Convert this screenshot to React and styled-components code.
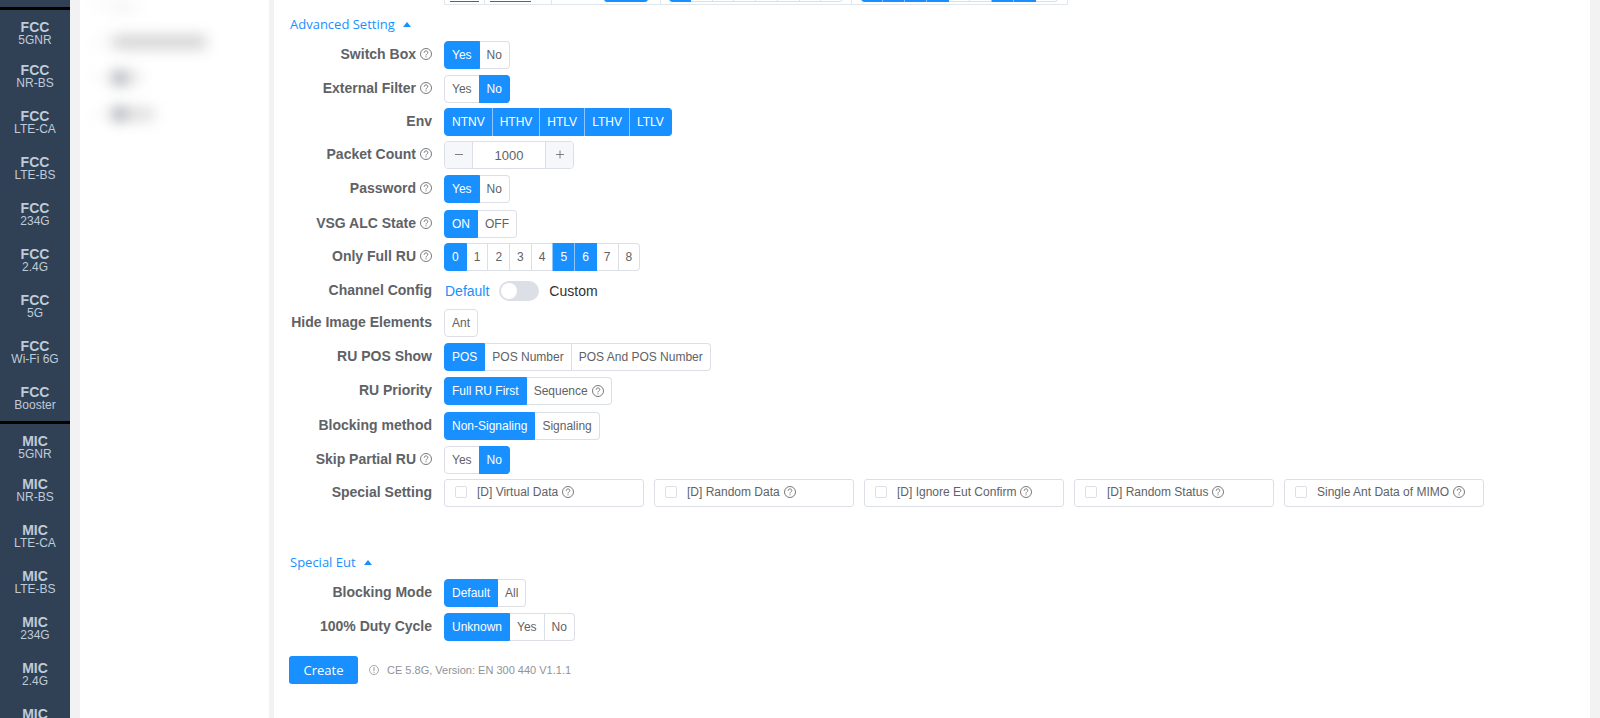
import React from 'react';
import styled, { createGlobalStyle } from 'styled-components';

const GlobalStyle = createGlobalStyle`
    * {
        box-sizing: border-box;
    }
    body {
        margin: 0;
        background-color: #f2f2f2;
        color: #606266;
        font-family: "Liberation Sans", Arial, sans-serif;
        font-size: 12px;
    }
`;

const Page = styled.div`
    display: flex;
    height: 100vh;
    overflow: hidden;
`;

const SideNav = styled.nav`
    flex: 0 0 70px;
    padding-top: 7px;
    background-color: #304156;
    overflow: hidden;
`;

const NavGroup = styled.div`
    border-top: 3px solid #000;
`;

const NavItem = styled.a`
    display: block;
    height: 46px;
    padding-top: 10px;
    color: #bfcbd9;
    font-size: 12px;
    line-height: 12px;
    text-align: center;
    text-decoration: none;

    &:first-child {
        height: 43px;
    }
`;

const NavTitle = styled.strong`
    display: block;
    font-size: 14px;
    line-height: 14px;
`;

const TreePanel = styled.aside`
    flex: 0 0 189px;
    margin: 0 5px 0 10px;
    padding: 0 16px;
    background-color: #fff;
    overflow: hidden;
`;

const TreeNode = styled.div`
    display: flex;
    align-items: center;
    height: 36px;
    filter: blur(7px);

    &:first-child {
        height: 24px;
        align-items: flex-start;
    }
`;

const TreeArrow = styled.span`
    width: 6px;
    height: 6px;
    margin-right: 10px;
    background-color: #e8e8e8;
`;

const TreeIcon = styled.span`
    width: 14px;
    height: 14px;
    background-color: ${props => props.$color};
`;

const TreeText = styled.span`
    width: ${props => props.$width}px;
    height: 14px;
    background-color: ${props => props.$color};
`;

const Main = styled.main`
    flex: 1;
    min-width: 0;
    margin-right: 10px;
    padding: 0 15px;
    background-color: #fff;
`;

const TableTail = styled.div`
    display: flex;
    width: 624px;
    height: 5px;
    margin-left: 155px;
    border: solid #dfe6ec;
    border-width: 0 0 1px 1px;
`;

const TailCell = styled.div`
    display: flex;
    align-items: flex-end;
    flex: 0 0 ${props => props.$width}px;
    height: 4px;
    padding: 0 ${props => props.$pad || 5}px 2px;
    border-right: 1px solid #dfe6ec;
    overflow: hidden;
`;

const TailUnderline = styled.span`
    width: ${props => props.$width}px;
    border-bottom: 1px solid #606266;
`;

const TailButton = styled.span`
    width: 44px;
    height: 28px;
    margin: 0 4px 0 auto;
    border-radius: 3px;
    background-color: #1890ff;
`;

const TailSegment = styled.span`
    flex: 1;
    height: 28px;
    border: solid ${props => (props.$on ? '#1890ff' : '#dcdfe6')};
    border-width: 1px 1px 1px 0;
    background-color: ${props => (props.$on ? '#1890ff' : '#fff')};
    box-shadow: ${props => (props.$on ? '-1px 0 0 0 #8cc5ff' : 'none')};

    &:first-child {
        border-radius: 4px 0 0 4px;
        box-shadow: none;
    }
    &:last-child {
        border-radius: 0 4px 4px 0;
    }
`;

const SectionToggle = styled.button`
    display: flex;
    align-items: center;
    gap: 8px;
    height: 36px;
    padding: 2px 1px 0;
    border: 0;
    background: none;
    color: #1890ff;
    font-family: "Open Sans", "Noto Sans", sans-serif;
    font-size: 13px;
    line-height: 18px;

    &::after {
        content: "";
        border: solid transparent;
        border-width: 0 4px 5px;
        border-bottom-color: #1890ff;
    }
`;

const Section = styled.section`
    margin-bottom: ${props => props.$space}px;
`;

const Row = styled.div`
    display: flex;
    align-items: center;
    gap: 12px;
    min-height: 28px;
    margin-bottom: ${props => props.$gap}px;
`;

const RowLabel = styled.div`
    display: flex;
    justify-content: flex-end;
    align-items: center;
    gap: 4px;
    flex: 0 0 143px;
    padding-bottom: 2px;
    font-size: 14px;
    font-weight: bold;
    line-height: 18px;
    white-space: nowrap;
`;

const Icon = styled.svg`
    flex: none;
    width: ${props => props.$size || 12}px;
    height: ${props => props.$size || 12}px;
    fill: none;
    stroke: currentColor;
`;

const Group = styled.div`
    display: flex;
`;

const Option = styled.label`
    display: flex;
    cursor: pointer;
`;

const OptionInput = styled.input`
    appearance: none;
    position: absolute;
    margin: 0;
    opacity: 0;
`;

const OptionText = styled.span`
    display: flex;
    align-items: center;
    gap: 4px;
    height: 28px;
    padding: 0 7px 1px;
    border: solid #dcdfe6;
    border-width: 1px 1px 1px 0;
    background-color: #fff;
    white-space: nowrap;

    ${Option}:first-child & {
        border-left-width: 1px;
        border-radius: 4px 0 0 4px;
    }
    ${Option}:last-child & {
        border-radius: 0 4px 4px 0;
    }
    ${Option}:only-child & {
        border-radius: 4px;
    }
    ${OptionInput}:checked + & {
        border-color: #1890ff;
        background-color: #1890ff;
        color: #fff;
        box-shadow: -1px 0 0 0 ${props => (props.$multi ? '#8cc5ff' : '#1890ff')};
    }
    ${Option}:first-child ${OptionInput}:checked + & {
        box-shadow: none;
    }
`;

const Counter = styled.div`
    display: flex;
    width: 130px;
    height: 28px;
    border: 1px solid #dcdfe6;
    border-radius: 4px;
    overflow: hidden;
`;

const CounterButton = styled.button`
    display: flex;
    flex: 0 0 27px;
    align-items: center;
    justify-content: center;
    padding: 0;
    border: 0;
    background-color: #f5f7fa;
    color: #606266;
`;

const CounterInput = styled.input`
    flex: 1;
    min-width: 0;
    padding: 0;
    border: solid #dcdfe6;
    border-width: 0 1px;
    color: #606266;
    font-family: inherit;
    font-size: 13px;
    text-align: center;
`;

const SwitchLabel = styled.label`
    display: flex;
    align-items: center;
    gap: 10px;
    padding-left: 1px;
    color: #1890ff;
    font-size: 14px;
`;

const SwitchInput = styled.input`
    appearance: none;
    display: flex;
    align-items: center;
    width: 40px;
    height: 20px;
    margin: 0;
    padding: 0 2px;
    border-radius: 10px;
    background-color: #dcdfe6;

    &::before {
        content: "";
        width: 16px;
        height: 16px;
        border-radius: 50%;
        background-color: #fff;
    }
    &:checked {
        justify-content: flex-end;
        background-color: #1890ff;
    }
`;

const SwitchOff = styled.span`
    color: #303133;
`;

const Checks = styled.div`
    display: flex;
    flex-wrap: wrap;
    gap: 10px;
`;

const CheckBox = styled.label`
    display: flex;
    align-items: center;
    gap: 4px;
    width: 200px;
    height: 28px;
    padding: 0 10px 2px;
    border: 1px solid #dcdfe6;
    border-radius: 3px;
    white-space: nowrap;
`;

const CheckInput = styled.input`
    appearance: none;
    width: 12px;
    height: 12px;
    margin: 0 6px 0 0;
    border: 1px solid #dcdfe6;
    border-radius: 2px;
    background-color: #fff;

    &:checked {
        border-color: #1890ff;
        background-color: #1890ff;
    }
`;

const Footer = styled.footer`
    display: flex;
    align-items: center;
`;

const CreateButton = styled.button`
    width: 69px;
    height: 28px;
    padding: 0;
    border: 0;
    border-radius: 3px;
    background-color: #1890ff;
    color: #fff;
    font-family: "Open Sans", "Noto Sans", sans-serif;
    font-size: 13px;
`;

const Hint = styled.span`
    display: flex;
    align-items: center;
    gap: 8px;
    margin-left: 11px;
    color: #909399;
    font-size: 11px;
`;

const bands = ['5GNR', 'NR-BS', 'LTE-CA', 'LTE-BS', '234G', '2.4G', '5G', 'Wi-Fi 6G', 'Booster'];

const navGroups = [
    { title: 'FCC', items: bands },
    { title: 'MIC', items: bands.slice(0, 7) },
];

const treeNodes = [
    { icon: '#f4f4f4', text: '#fafafa', width: 16 },
    { icon: '#d4d4d4', text: '#d2d2d2', width: 80 },
    { icon: '#a8acb4', text: '#e6e6e6', width: 14 },
    { icon: '#a8acb4', text: '#dedede', width: 28 },
];

const advancedRows = [
    { label: 'Switch Box', help: true, options: ['Yes', 'No'], value: ['Yes'], gap: 6 },
    { label: 'External Filter', help: true, options: ['Yes', 'No'], value: ['No'], gap: 5 },
    { label: 'Env', multi: true, options: ['NTNV', 'HTHV', 'HTLV', 'LTHV', 'LTLV'], value: ['NTNV', 'HTHV', 'HTLV', 'LTHV', 'LTLV'], gap: 5 },
    { label: 'Packet Count', help: true, type: 'counter', gap: 6 },
    { label: 'Password', help: true, options: ['Yes', 'No'], value: ['Yes'], gap: 7 },
    { label: 'VSG ALC State', help: true, options: ['ON', 'OFF'], value: ['ON'], gap: 5 },
    { label: 'Only Full RU', help: true, multi: true, options: ['0', '1', '2', '3', '4', '5', '6', '7', '8'], value: ['0', '5', '6'], gap: 6 },
    { label: 'Channel Config', type: 'switch', gap: 4 },
    { label: 'Hide Image Elements', multi: true, options: ['Ant'], value: [], gap: 6 },
    { label: 'RU POS Show', options: ['POS', 'POS Number', 'POS And POS Number'], value: ['POS'], gap: 6 },
    { label: 'RU Priority', options: ['Full RU First', 'Sequence'], value: ['Full RU First'], optionHelp: 'Sequence', gap: 7 },
    { label: 'Blocking method', options: ['Non-Signaling', 'Signaling'], value: ['Non-Signaling'], gap: 6 },
    { label: 'Skip Partial RU', help: true, options: ['Yes', 'No'], value: ['No'], gap: 5 },
    { label: 'Special Setting', type: 'checks', gap: 0 },
];

const eutRows = [
    { label: 'Blocking Mode', options: ['Default', 'All'], value: ['Default'], gap: 6 },
    { label: '100% Duty Cycle', options: ['Unknown', 'Yes', 'No'], value: ['Unknown'], gap: 0 },
];

const specialSettings = [
    '[D] Virtual Data',
    '[D] Random Data',
    '[D] Ignore Eut Confirm',
    '[D] Random Status',
    'Single Ant Data of MIMO',
];

const HelpIcon = () => (
    <Icon viewBox="0 0 12 12" aria-hidden="true">
        <circle cx="6" cy="6" r="5.5" strokeWidth="0.85" />
        <path d="M4.2 4.8C4.2 3.6 5 2.9 6 2.9s1.8.6 1.8 1.7c0 1.2-1.8 1.4-1.8 2.8" strokeWidth="0.85" />
        <path d="M6 8.3v1" strokeWidth="0.9" />
    </Icon>
);

const InfoIcon = () => (
    <Icon $size={10} viewBox="0 0 10 10" aria-hidden="true">
        <circle cx="5" cy="5" r="4.5" strokeWidth="0.8" />
        <path d="M5 2.2v3.8M5 6.8v1" strokeWidth="1" />
    </Icon>
);

const Segments = ({ row }) => (
    <Group role="group" aria-label={row.label}>
        {row.options.map(option => (
            <Option key={option}>
                <OptionInput
                    type={row.multi ? 'checkbox' : 'radio'}
                    name={row.label}
                    defaultChecked={row.value.includes(option)}
                />
                <OptionText $multi={row.multi}>
                    {option}
                    {row.optionHelp === option && <HelpIcon />}
                </OptionText>
            </Option>
        ))}
    </Group>
);

const PacketCounter = () => (
    <Counter>
        <CounterButton aria-label="Decrease">
            <Icon viewBox="0 0 12 12"><path d="M2 5.5h8" strokeWidth="0.8" /></Icon>
        </CounterButton>
        <CounterInput aria-label="Packet Count" defaultValue="1000" />
        <CounterButton aria-label="Increase">
            <Icon viewBox="0 0 12 12"><path d="M2 5.5h8M6 1.5v8" strokeWidth="0.8" /></Icon>
        </CounterButton>
    </Counter>
);

const ChannelSwitch = () => (
    <SwitchLabel>
        Default
        <SwitchInput type="checkbox" role="switch" />
        <SwitchOff>Custom</SwitchOff>
    </SwitchLabel>
);

const SpecialChecks = () => (
    <Checks>
        {specialSettings.map(name => (
            <CheckBox key={name}>
                <CheckInput type="checkbox" />
                {name}
                <HelpIcon />
            </CheckBox>
        ))}
    </Checks>
);

const controls = {
    counter: PacketCounter,
    switch: ChannelSwitch,
    checks: SpecialChecks,
};

const FormRow = ({ row }) => {
    const Control = controls[row.type] || Segments;
    return (
        <Row $gap={row.gap}>
            <RowLabel>
                {row.label}
                {row.help && <HelpIcon />}
            </RowLabel>
            <Control row={row} />
        </Row>
    )
}

const TailSegments = ({ values }) => values.map((on, i) => <TailSegment key={i} $on={on} />);

const App = () => {
    return (
        <Page>
            <GlobalStyle />
            <SideNav>
                {navGroups.map(group => (
                    <NavGroup key={group.title}>
                        {group.items.map(item => (
                            <NavItem href="#" key={item}>
                                <NavTitle>{group.title}</NavTitle>
                                {item}
                            </NavItem>
                        ))}
                    </NavGroup>
                ))}
            </SideNav>
            <TreePanel>
                {treeNodes.map((node, i) => (
                    <TreeNode key={i}>
                        <TreeArrow />
                        <TreeIcon $color={node.icon} />
                        <TreeText $color={node.text} $width={node.width} />
                    </TreeNode>
                ))}
            </TreePanel>
            <Main>
                <TableTail>
                    <TailCell $width={40}><TailUnderline $width={29} /></TailCell>
                    <TailCell $width={67}><TailUnderline $width={41} /></TailCell>
                    <TailCell $width={109} $pad={8}><TailButton /></TailCell>
                    <TailCell $width={191} $pad={8}>
                        <TailSegments values={[1, 0, 0, 0, 0, 0, 0, 0]} />
                    </TailCell>
                    <TailCell $width={216} $pad={9}>
                        <TailSegments values={[1, 1, 1, 1, 0, 0, 1, 1, 0]} />
                    </TailCell>
                </TableTail>
                <Section $space={36}>
                    <SectionToggle>Advanced Setting</SectionToggle>
                    {advancedRows.map(row => <FormRow key={row.label} row={row} />)}
                </Section>
                <Section $space={15}>
                    <SectionToggle>Special Eut</SectionToggle>
                    {eutRows.map(row => <FormRow key={row.label} row={row} />)}
                </Section>
                <Footer>
                    <CreateButton>Create</CreateButton>
                    <Hint><InfoIcon />CE 5.8G, Version: EN 300 440 V1.1.1</Hint>
                </Footer>
            </Main>
        </Page>
    )
}

export default App
